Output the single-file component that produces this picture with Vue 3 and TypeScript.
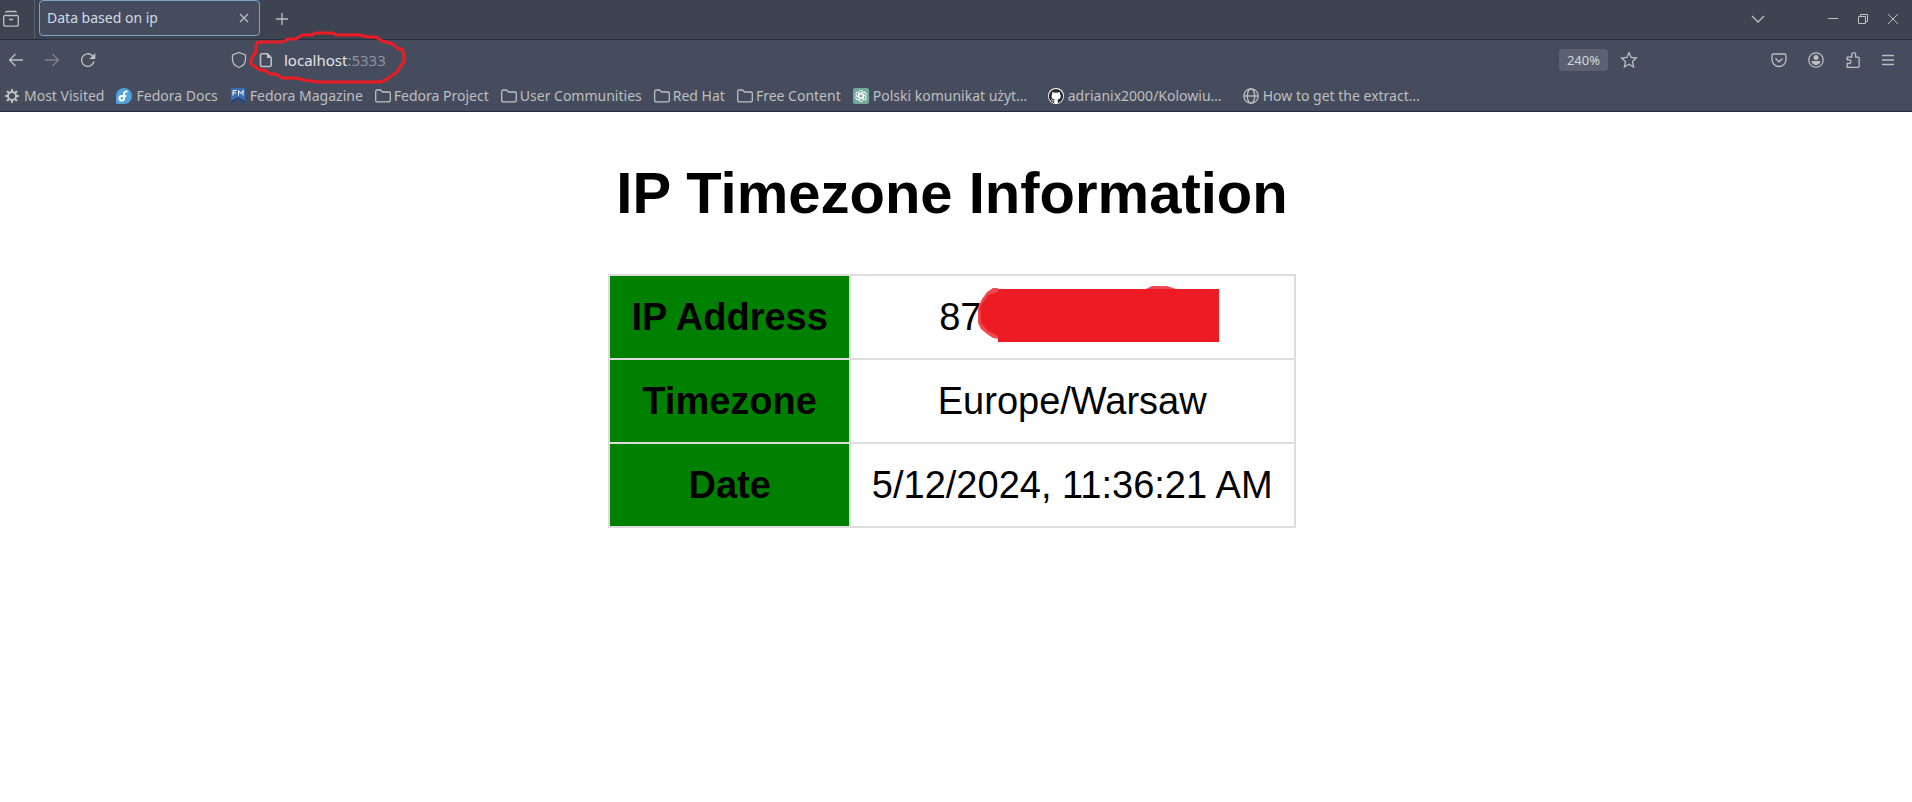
<script setup lang="ts">
type IconName = 'gear' | 'fedora' | 'magazine' | 'folder' | 'gpt' | 'github' | 'globe'

interface Bookmark {
  icon: IconName
  label: string
  wide?: boolean
}

const bookmarks: Bookmark[] = [
  { icon: 'gear', label: 'Most Visited' },
  { icon: 'fedora', label: 'Fedora Docs' },
  { icon: 'magazine', label: 'Fedora Magazine' },
  { icon: 'folder', label: 'Fedora Project' },
  { icon: 'folder', label: 'User Communities' },
  { icon: 'folder', label: 'Red Hat' },
  { icon: 'folder', label: 'Free Content' },
  { icon: 'gpt', label: 'Polski komunikat użyt…', wide: true },
  { icon: 'github', label: 'adrianix2000/Kolowiu…', wide: true },
  { icon: 'globe', label: 'How to get the extract…', wide: true },
]

const petals = [0, 60, 120, 180, 240, 300]
const teeth = [0, 45, 90, 135, 180, 225, 270, 315]
</script>

<template>
  <div class="browser">
    <header class="chrome">
      <div class="tabs">
        <button class="icon-btn view" aria-label="Firefox View">
          <svg width="18" height="18" viewBox="0 0 18 18"><path d="M3.500 2.500q.5-1 1.500-1h8q1 0 1.500 1M3 5.500h12a1.300 1.300 0 0 1 1.300 1.300v7.400a2 2 0 0 1-2 2H3.700a2 2 0 0 1-2-2V6.800A1.300 1.300 0 0 1 3 5.500zM7 9.500h4" /></svg>
        </button>
        <div class="tab">
          <span class="tab-title">Data based on ip</span>
          <button class="icon-btn" aria-label="Close tab">
            <svg width="10" height="10" viewBox="0 0 10 10"><path d="M1 1l8 8M9 1l-8 8" /></svg>
          </button>
        </div>
        <button class="icon-btn new-tab" aria-label="New tab">
          <svg width="12" height="12" viewBox="0 0 12 12"><path d="M6 0v12M0 6h12" /></svg>
        </button>
        <div class="window-controls">
          <button class="icon-btn list" aria-label="List all tabs">
            <svg width="14" height="8" viewBox="0 0 14 8"><path d="M1 1l6 6 6-6" /></svg>
          </button>
          <button class="icon-btn" aria-label="Minimize">
            <svg width="10" height="10" viewBox="0 0 10 10"><path class="thin" d="M0 4.500h10" /></svg>
          </button>
          <button class="icon-btn" aria-label="Restore">
            <svg width="10" height="10" viewBox="0 0 10 10"><path class="thin" d="M.5 2.500h7v7h-7zM2.500 2.500v-2h7v7h-2" /></svg>
          </button>
          <button class="icon-btn" aria-label="Close window">
            <svg width="10" height="10" viewBox="0 0 10 10"><path class="thin" d="M0 0l10 10M10 0l-10 10" /></svg>
          </button>
        </div>
      </div>

      <nav class="toolbar">
        <div class="history">
          <button class="icon-btn" aria-label="Back">
            <svg width="16" height="14" viewBox="0 0 16 14"><path d="M15 7H2M7.500 1L1.500 7l6 6" /></svg>
          </button>
          <button class="icon-btn" aria-label="Forward" disabled>
            <svg width="16" height="14" viewBox="0 0 16 14"><path d="M1 7h13M8.500 1l6 6-6 6" /></svg>
          </button>
          <button class="icon-btn" aria-label="Reload">
            <svg width="16" height="16" viewBox="0 0 16 16"><path d="M14 9.500A6.300 6.300 0 1 1 12.200 3.500L14 5.500" /><path class="fill" d="M15.300 1v6H9.300z" /></svg>
          </button>
        </div>
        <div class="address">
          <svg width="16" height="18" viewBox="0 0 16 18"><path d="M8 1.500l6.500 2.500v4.500c0 3.500-2.500 6.500-6.500 8-4-1.500-6.500-4.500-6.500-8V4z" /></svg>
          <div class="location">
            <svg width="14" height="16" viewBox="0 0 14 16"><path class="sheet" d="M3 1.800h5.500l3.700 4V13a1.500 1.500 0 0 1-1.500 1.500H3A1.500 1.500 0 0 1 1.500 13V3.300A1.500 1.500 0 0 1 3 1.800z" /><path class="fill" d="M8 1v5h5z" /></svg>
            <span class="url">localhost<span class="port">:5333</span></span>
            <svg class="scribble" width="160" height="56" viewBox="0 0 160 56"><path d="M10 10H35L40 7H48L54 3H63L68 1H85L88 3H112L120 5H128L134 9L145 12L150 17H154L156 22V30L152 35L148 41L143 44L138 48L132 50H70L56 48L48 46H34L28 42H22L16 38H12L3 32V28L5 24L8 20V14Z" /></svg>
          </div>
          <button class="zoom">240%</button>
          <button class="icon-btn" aria-label="Bookmark this page">
            <svg width="18" height="18" viewBox="0 0 18 18"><path d="M9 1.700l2.200 4.800 5.200.6-3.900 3.500 1.100 5.400L9 13.300 4.400 16l1.100-5.400L1.600 7.100l5.200-.6z" /></svg>
          </button>
        </div>
        <div class="actions">
          <button class="icon-btn" aria-label="Save to Pocket">
            <svg width="16" height="16" viewBox="0 0 16 16"><path d="M2.500 2h11a1.500 1.500 0 0 1 1.500 1.500V7.500a7 7 0 0 1-14 0V3.500A1.500 1.500 0 0 1 2.500 2zM4.500 6.500L8 9.800l3.500-3.300" /></svg>
          </button>
          <button class="icon-btn" aria-label="Account">
            <svg width="16" height="16" viewBox="0 0 16 16"><circle cx="8" cy="8" r="7.200" /><circle class="fill" cx="8" cy="5.500" r="2.500" /><path class="fill" d="M3.500 9h9a4.500 4 0 0 1-9 0z" /></svg>
          </button>
          <button class="icon-btn" aria-label="Extensions">
            <svg width="16" height="18" viewBox="0 0 16 18"><path d="M2.200 16.300V12.500h2a1.800 1.800 0 0 0 0-3.600h-2V6.200h4.600V3.600a1.900 1.900 0 0 1 3.800 0v2.600h2.400a1.200 1.200 0 0 1 1.200 1.200v7.700a1.200 1.200 0 0 1-1.200 1.200z" /></svg>
          </button>
          <button class="icon-btn" aria-label="Menu">
            <svg width="12" height="12" viewBox="0 0 12 12"><path d="M0 1.500h12M0 6h12M0 10.500h12" /></svg>
          </button>
        </div>
      </nav>

      <div class="bookmarks">
        <a v-for="b in bookmarks" :key="b.label" class="bookmark" :class="[b.icon, { wide: b.wide }]" href="#">
          <svg v-if="b.icon === 'gear'" width="16" height="16" viewBox="0 0 16 16">
            <circle class="bold" cx="8" cy="8" r="4" />
            <path v-for="a in teeth" :key="a" class="bold" d="M8 4V1" :transform="`rotate(${a} 8 8)`" />
          </svg>
          <svg v-else-if="b.icon === 'fedora'" width="16" height="16" viewBox="0 0 16 16">
            <path class="blue" d="M8 0a8 8 0 1 1 0 16H1.500A1.500 1.500 0 0 1 0 14.500V8a8 8 0 0 1 8-8z" />
            <path class="white" d="M11.500 3.700C9.500 2.900 8 4 8 5.800v4.700a2.300 2.300 0 1 1-2.500-2.500h4.800" />
          </svg>
          <svg v-else-if="b.icon === 'magazine'" width="16" height="16" viewBox="0 0 16 16">
            <path class="navy" d="M1 0h14v16l-7-5-7 5z" />
            <path class="ribbon" d="M1 16v-3l7-4 7 4v3l-7-5z" />
            <path class="white fine" d="M3 7.500V2.500h3.500M3 4.900h3M8.500 7.500V2.500l2.300 3 2.300-3V7.500" />
          </svg>
          <svg v-else-if="b.icon === 'folder'" width="16" height="16" viewBox="0 0 16 16">
            <path d="M2 2h3.500l2 2H14a1.300 1.300 0 0 1 1.300 1.300V12.500A1.300 1.300 0 0 1 14 13.800H2A1.300 1.300 0 0 1 .7 12.500V3.300A1.300 1.300 0 0 1 2 2z" />
          </svg>
          <svg v-else-if="b.icon === 'gpt'" width="16" height="16" viewBox="0 0 16 16">
            <rect class="green" width="16" height="16" rx="2" />
            <path v-for="a in petals" :key="a" class="white hair" d="M5.800 9.200V4.800a2.300 2.300 0 0 1 4.300-1.200M5.800 6.700L8 5.400l4 2.300" :transform="`rotate(${a} 8 8)`" />
          </svg>
          <svg v-else-if="b.icon === 'github'" width="16" height="16" viewBox="0 0 16 16">
            <circle class="paper" cx="8" cy="8" r="8" />
            <path class="ink" d="M8 .9a7.200 7.200 0 0 0-2.300 14c.4.100.5-.2.500-.4v-1.300c-2 .4-2.500-.9-2.600-1.300-.5-.8-1-.9-.5-1 .8-.1 1.100.9 1.400 1.100.6.900 1.600.7 1.900.5.100-.5.300-.8.500-1-1.800-.2-3.400-.9-3.400-3.500 0-.8.300-1.500.8-2-.2-.6-.2-1.300.1-2 .7 0 1.400.4 2 .8a7 7 0 0 1 3.400 0c.6-.4 1.300-.8 2-.8.3.700.3 1.400.1 2 .5.500.8 1.200.8 2 0 2.700-1.600 3.300-3.400 3.500.3.300.5.800.5 1.500v1.500c0 .2.100.5.500.4A7.200 7.200 0 0 0 8 .9z" />
          </svg>
          <svg v-else width="16" height="16" viewBox="0 0 16 16">
            <circle cx="8" cy="8" r="7.200" /><ellipse cx="8" cy="8" rx="3.700" ry="7.200" /><path d="M1 8h14" />
          </svg>
          <span>{{ b.label }}</span>
        </a>
      </div>
    </header>

    <main class="page">
      <h1>IP Timezone Information</h1>
      <table>
        <tbody>
          <tr>
            <th scope="row">IP Address</th>
            <td>
              <span class="masked">87<svg class="redaction" width="244" height="58" viewBox="0 0 244 58"><path class="smear" d="M23 3H18L12 7L7 14L3 22V38L6 44L12 49L18 53L24 54ZM171 4L177 1H192L201 4Z" /><path class="cover" d="M23 7L13 10L5 22L6 38L13 46L23 51V57H244V4H23Z" /></svg></span>
            </td>
          </tr>
          <tr>
            <th scope="row">Timezone</th>
            <td>Europe/Warsaw</td>
          </tr>
          <tr>
            <th scope="row">Date</th>
            <td>5/12/2024, 11:36:21 AM</td>
          </tr>
        </tbody>
      </table>
    </main>
  </div>
</template>

<style>
body {
  margin: 0;
  background: #fff;
}
</style>

<style scoped>
.browser {
  min-height: 100vh;
  background: #fff;
}

.chrome {
  color: #bfbfbf;
  font: 14px/20px "Noto Sans", sans-serif;
  background: #454c5e;
  border-bottom: 1px solid #252f3b;
}

svg {
  display: block;
  flex: none;
  fill: none;
  stroke: currentColor;
  stroke-width: 1.3;
}

.thin {
  stroke-width: 1;
}

.bold {
  stroke-width: 2;
}

.sheet {
  stroke-width: 1.6;
}

.fill {
  fill: currentColor;
  stroke: none;
}

.icon-btn {
  display: flex;
  align-items: center;
  justify-content: center;
  padding: 0;
  border: 0;
  background: none;
  color: inherit;
}

.icon-btn:disabled {
  color: #7c818c;
}

.tabs {
  display: flex;
  align-items: center;
  height: 39px;
  background: #3e4351;
  border-bottom: 1px solid #252f3b;
}

.view {
  align-self: stretch;
  width: 35px;
  padding: 0 12px 2px 0;
  box-sizing: border-box;
  border-right: 1px solid #5a5f6b;
}

.tab {
  display: flex;
  align-items: center;
  justify-content: space-between;
  box-sizing: border-box;
  width: 221px;
  height: 36px;
  margin: 0 16px 3px 4px;
  padding: 0 10px 0 7px;
  border: 1px solid #7da3c8;
  border-radius: 4px;
  background: #454c5e;
}

.tab-title {
  color: #d3dae3;
}

.new-tab,
.window-controls {
  padding-bottom: 2px;
}

.window-controls {
  display: flex;
  align-items: center;
  gap: 20px;
  margin-left: auto;
  padding-right: 14px;
}

.list {
  margin-right: 43px;
}

.toolbar {
  display: flex;
  align-items: center;
  box-sizing: border-box;
  height: 41px;
  padding: 0 18px 1px 8px;
}

.history,
.actions {
  display: flex;
  align-items: center;
  gap: 20px;
}

.actions {
  gap: 21px;
}

.address {
  display: flex;
  flex: 1;
  align-items: center;
  gap: 12px;
  margin: 0 133px 0 135px;
}

.location {
  position: relative;
  display: flex;
  flex: 1;
  align-items: center;
  gap: 11px;
}

.url {
  color: #e3e5e8;
  font-size: 15px;
}

.port {
  color: #8f949f;
}

.scribble {
  position: absolute;
  top: -18px;
  left: -11px;
  stroke: #ed1c24;
  stroke-width: 3;
  stroke-linejoin: round;
  overflow: visible;
}

.zoom {
  padding: 0 8px;
  border: 0;
  border-radius: 3px;
  color: #d3d5d8;
  font: 13px/22px "Noto Sans", sans-serif;
  background: #5b6170;
}

.bookmarks {
  display: flex;
  align-items: center;
  gap: 12px;
  height: 30px;
  padding: 0 4px;
}

.bookmark {
  display: flex;
  align-items: center;
  gap: 4px;
  color: inherit;
  text-decoration: none;
  white-space: nowrap;
}

.folder {
  gap: 3px;
}

.wide {
  min-width: 183px;
}

.blue {
  fill: #51a2da;
  stroke: none;
}

.navy {
  fill: #3c6eb4;
  stroke: none;
}

.ribbon {
  fill: #294172;
  stroke: none;
}

.green {
  fill: #74aa9c;
  stroke: none;
}

.paper {
  fill: #fff;
  stroke: none;
}

.ink {
  fill: #24292f;
  stroke: none;
}

.white {
  stroke: #fff;
  stroke-width: 2;
}

.fine {
  stroke-width: 1;
}

.hair {
  stroke-width: 1;
}

.page {
  margin-right: 8px;
  padding-top: 48px;
  color: #000;
  font: 38px/44px "Liberation Sans", Arial, sans-serif;
  text-align: center;
}

h1 {
  margin: 0 0 48px;
  font-size: 58px;
  line-height: 66px;
}

table {
  margin: 0 auto;
  border-collapse: collapse;
}

th,
td {
  padding: 19px 21px;
  border: 2px solid #ddd;
}

th {
  background: #008000;
}

.masked {
  position: relative;
  display: inline-block;
  width: 266px;
  text-align: left;
  vertical-align: top;
}

.redaction {
  position: absolute;
  top: -10px;
  left: 36px;
  stroke: none;
}

.smear {
  fill: #f04a51;
}

.cover {
  fill: #ed1c24;
}
</style>
